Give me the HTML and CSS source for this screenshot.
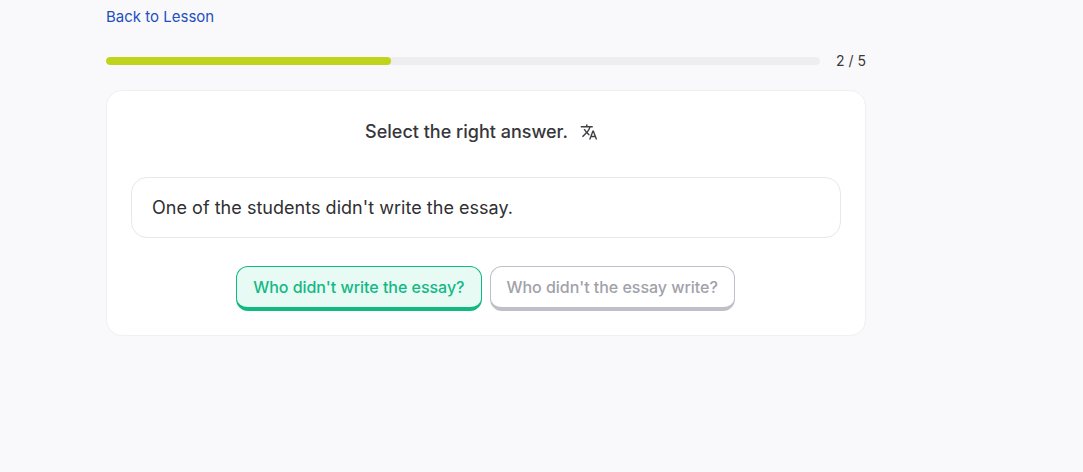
FILE: index.html
```html
<!DOCTYPE html>
<html lang="en">
<head>
    <meta charset="UTF-8">
    <title>Lesson</title>
    <link rel="stylesheet" href="styles.css">
</head>
<body>
    <main class="lesson">
        <a class="back-link" href="#">Back to Lesson</a>
        <div class="progress-row">
            <div class="progress-track">
                <div class="progress-fill" style="width: 39.9%"></div>
            </div>
            <span class="progress-count">2 / 5</span>
        </div>
        <section class="card">
            <div class="prompt">
                <span>Select the right answer.</span>
                <svg class="translate-icon" viewBox="0 0 24 24" width="18" height="18">
                    <path fill="currentColor" d="M12.87 15.07l-2.54-2.51.03-.03A17.52 17.52 0 0 0 14.07 6H17V4h-7V2H8v2H1v1.99h11.17C11.5 7.92 10.44 9.75 9 11.35 8.07 10.32 7.3 9.19 6.69 8h-2c.73 1.63 1.73 3.17 2.98 4.56l-5.09 5.02L4 19l5-5 3.11 3.11.76-2.04zM18.5 10h-2L12 22h2l1.12-3h4.75L21 22h2l-4.5-12zm-2.62 7l1.62-4.33L19.12 17h-3.24z"/>
                </svg>
            </div>
            <div class="sentence">One of the students didn't write the essay.</div>
            <div class="answers">
                <button class="answer answer-correct">Who didn't write the essay?</button>
                <button class="answer answer-muted">Who didn't the essay write?</button>
            </div>
        </section>
    </main>
</body>
</html>
```

FILE: styles.css
```css
body {
    margin: 0;
    background-color: #f9f9fb;
    font-family: Inter, "Liberation Sans", sans-serif;
    color: #27272a;
}
.lesson {
    width: 760px;
    margin-left: 106px;
    padding-top: 8px;
}
.back-link {
    display: block;
    font-size: 15px;
    line-height: 18px;
    color: #1e4fc0;
    text-decoration: none;
}
.progress-row {
    display: flex;
    align-items: center;
    gap: 16px;
    margin-top: 26px;
}
.progress-track {
    flex: 1;
    height: 8px;
    border-radius: 4px;
    background-color: #eeeef0;
    overflow: hidden;
}
.progress-fill {
    height: 100%;
    border-radius: 4px;
    background-color: #c1d31a;
}
.progress-count {
    font-size: 14px;
    line-height: 17px;
    color: #3a3a40;
}
.card {
    margin-top: 21px;
    height: 246px;
    padding: 0 24px;
    box-sizing: border-box;
    background-color: #fff;
    border: 1px solid #f0f0f3;
    border-radius: 16px;
}
.prompt {
    display: flex;
    justify-content: center;
    align-items: center;
    gap: 12px;
    margin-top: 29px;
    padding-right: 9px;
    font-size: 18px;
    font-weight: 500;
    line-height: 24px;
    color: #36363b;
}
.translate-icon {
    display: block;
    color: #3f3f46;
}
.sentence {
    margin-top: 33px;
    padding: 0 20px;
    height: 61px;
    line-height: 59px;
    box-sizing: border-box;
    border: 1px solid #e8e8ec;
    border-radius: 16px;
    font-size: 18px;
    font-weight: 400;
    letter-spacing: 0.03px;
    color: #2f2f33;
}
.answers {
    display: flex;
    justify-content: center;
    gap: 8px;
    margin-top: 28px;
    padding-right: 1px;
}
.answer {
    height: 45px;
    padding: 0 16px;
    border-radius: 12px;
    font-family: inherit;
    font-size: 16px;
    font-weight: 500;
    letter-spacing: -0.03px;
    background-color: #fff;
}
.answer-correct {
    color: #14b885;
    background-color: #e8faf4;
    border: 1px solid #10b981;
    border-bottom-width: 4px;
}
.answer-muted {
    color: #a1a1aa;
    border: 1px solid #bfbfc9;
    border-bottom-width: 4px;
}
```
